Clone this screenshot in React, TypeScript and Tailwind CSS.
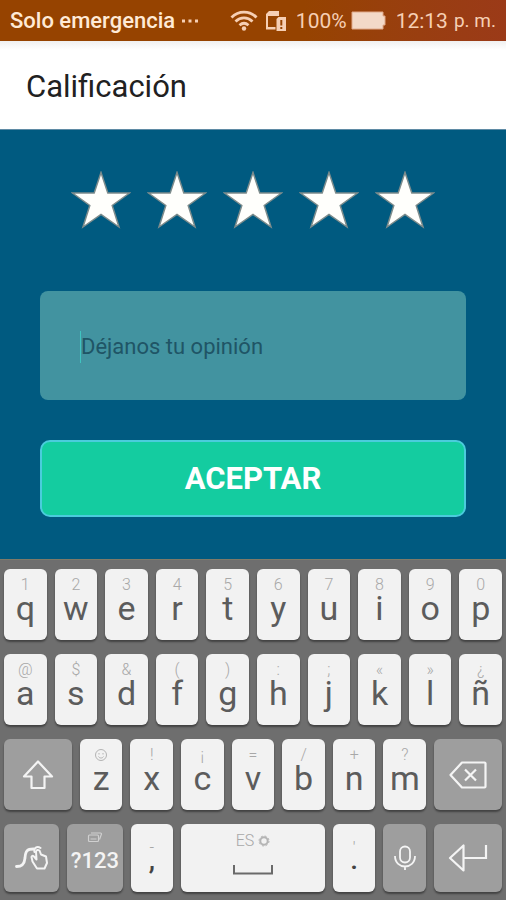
import React, { useState } from "react";
import clsx from "clsx";

interface KeyInterface {
  label: string;
  hint?: React.ReactNode;
}

const firstRow: KeyInterface[] = [
  { label: "q", hint: "1" },
  { label: "w", hint: "2" },
  { label: "e", hint: "3" },
  { label: "r", hint: "4" },
  { label: "t", hint: "5" },
  { label: "y", hint: "6" },
  { label: "u", hint: "7" },
  { label: "i", hint: "8" },
  { label: "o", hint: "9" },
  { label: "p", hint: "0" },
];

const secondRow: KeyInterface[] = [
  { label: "a", hint: "@" },
  { label: "s", hint: "$" },
  { label: "d", hint: "&" },
  { label: "f", hint: "(" },
  { label: "g", hint: ")" },
  { label: "h", hint: ":" },
  { label: "j", hint: ";" },
  { label: "k", hint: "«" },
  { label: "l", hint: "»" },
  { label: "ñ", hint: "¿" },
];

const SmileIcon = () => (
  <svg width="14" height="14" viewBox="0 0 14 14" fill="none" stroke="#b4b4b4">
    <circle cx="7" cy="7" r="5.5" />
    <path d="M5 5v1.5M9 5v1.5M4.5 8.5c1 2 4 2 5 0" />
  </svg>
);

const thirdRow: KeyInterface[] = [
  { label: "z", hint: <SmileIcon /> },
  { label: "x", hint: "!" },
  { label: "c", hint: "¡" },
  { label: "v", hint: "=" },
  { label: "b", hint: "/" },
  { label: "n", hint: "+" },
  { label: "m", hint: "?" },
];

const keyShadow = "rounded-md shadow-[0_2px_2px_rgba(0,0,0,0.4)]";

const LetterKey = ({ label, hint }: KeyInterface) => (
  <button
    type="button"
    className={clsx(
      "col-span-2 flex flex-col items-center bg-[#f2f2f2] pt-2",
      keyShadow
    )}
  >
    <span className="flex h-4 items-center text-base leading-4 font-light text-[#a8a8a8]">
      {hint}
    </span>
    <span className="text-[34px] leading-[30px] text-[#5c5c5c]">{label}</span>
  </button>
);

const SymbolKey = ({ label, hint }: KeyInterface) => (
  <button
    type="button"
    className={clsx(
      "col-span-2 flex flex-col items-center bg-[#f2f2f2] pt-4",
      keyShadow
    )}
  >
    <span className="h-3 text-base leading-4 font-light text-[#a0a0a0]">
      {hint}
    </span>
    <span className="text-[28px] leading-4 font-medium text-[#444444]">
      {label}
    </span>
  </button>
);

interface ActionKeyProps {
  name: string;
  className?: string;
  children: React.ReactNode;
}

const ActionKey = ({ name, className, children }: ActionKeyProps) => (
  <button
    type="button"
    aria-label={name}
    className={clsx(
      "flex items-center justify-center bg-[#9e9e9e] text-[#f4f4f4]",
      keyShadow,
      className
    )}
  >
    {children}
  </button>
);

const StatusBar = () => (
  <div className="flex h-[41px] items-center justify-between bg-linear-to-r from-[#964300] from-60% to-[#9b3a18] px-[10px] text-[21px] leading-7 text-[#f6cfb4]">
    <div className="flex items-center gap-[6px]">
      <span className="text-[22px] font-medium text-[#ffead6]">
        Solo emergencia
      </span>
      <svg width="18" height="4" viewBox="0 0 18 4" fill="currentColor">
        <path d="M1 .5h3v3H1zM7.500 .5h3v3h-3zM14 .5h3v3h-3z" />
      </svg>
    </div>
    <div className="flex items-center">
      <svg
        width="28"
        height="22"
        viewBox="0 0 28 22"
        fill="none"
        stroke="currentColor"
        strokeWidth="2.800"
      >
        <path d="M1.500 7.500C8.500 .3 19.500 .3 26.500 7.500" />
        <path d="M5.500 11.500c5-4.800 12-4.800 17 0" />
        <path d="M9.500 15.300c2.800-2.500 6.200-2.500 9 0" />
        <circle cx="14" cy="18.500" r="2.200" fill="currentColor" stroke="none" />
      </svg>
      <svg
        className="ml-[7px]"
        width="22"
        height="22"
        viewBox="0 0 22 22"
        fill="currentColor"
      >
        <path d="M4 1H14V6H3V17H10.500V19.500H1V4z" />
        <path
          fillRule="evenodd"
          d="M13.500 7H21V21H11.500V9zM15.300 10v5.500h2V10zm0 7v2h2v-2z"
        />
      </svg>
      <span className="ml-[9px]">100%</span>
      <svg className="ml-1" width="36" height="20" viewBox="0 0 36 20">
        <path d="M1 1h31v4h2v9h-2v4H1z" fill="#f3d9c8" stroke="#e0a98a" />
      </svg>
      <span className="ml-[9px]">12:13</span>
      <span className="ml-[6px] text-[19px]">p. m.</span>
    </div>
  </div>
);

const stars = [1, 2, 3, 4, 5];

const Rating = () => {
  const [rating, setRating] = useState(5);
  return (
    <div className="flex justify-center gap-4">
      {stars.map((star) => (
        <button
          key={star}
          type="button"
          aria-label={`${star} estrellas`}
          onClick={() => setRating(star)}
        >
          <svg width="60" height="58" viewBox="0 0 60 58">
            <path
              d="M30 1.500 36.800 22H58.500L41.200 34.500 48 56 30 43.500 12 56 18.800 34.500 1.500 22H23.200z"
              fill={star <= rating ? "#fffffc" : "none"}
              stroke="#7d8c8c"
              strokeWidth="1.500"
            />
          </svg>
        </button>
      ))}
    </div>
  );
};

const Keyboard = () => (
  <div className="flex flex-col gap-[14px] border-t border-[#7f7a68] bg-[#6e6e6e] px-1 pt-[9px] pb-2">
    <div className="grid h-[71px] grid-cols-20 gap-2">
      {firstRow.map((key) => (
        <LetterKey key={key.label} {...key} />
      ))}
    </div>
    <div className="grid h-[71px] grid-cols-20 gap-2">
      {secondRow.map((key) => (
        <LetterKey key={key.label} {...key} />
      ))}
    </div>
    <div className="grid h-[71px] grid-cols-20 gap-2">
      <ActionKey name="Mayúsculas" className="col-span-3">
        <svg
          width="32"
          height="30"
          viewBox="0 0 32 30"
          fill="none"
          stroke="currentColor"
          strokeWidth="2.200"
          strokeLinejoin="round"
        >
          <path d="M16 1.500 30 16.500H22.500V28H9.500V16.500H2z" />
        </svg>
      </ActionKey>
      {thirdRow.map((key) => (
        <LetterKey key={key.label} {...key} />
      ))}
      <ActionKey name="Borrar" className="col-span-3">
        <svg
          width="38"
          height="28"
          viewBox="0 0 38 28"
          fill="none"
          stroke="currentColor"
          strokeWidth="2.200"
          strokeLinejoin="round"
        >
          <path d="M13 1.500H35.500Q36.500 1.500 36.500 2.500V25.500Q36.500 26.500 35.500 26.500H13L1.500 14z" />
          <path d="m16 8.500 11 11M27 8.500l-11 11" />
        </svg>
      </ActionKey>
    </div>
    <div className="grid h-[68px] grid-cols-20 gap-2">
      <div className="col-span-5 grid grid-cols-2 gap-2">
        <ActionKey name="Escritura por deslizamiento">
          <svg
            width="34"
            height="26"
            viewBox="0 0 34 26"
            fill="none"
            stroke="currentColor"
            strokeWidth="2"
            strokeLinecap="round"
            strokeLinejoin="round"
          >
            <path
              d="M1.500 21.500C8 21.500 9.500 18 10 13 10.500 6 12 4 18.500 4"
              strokeWidth="2.800"
            />
            <path d="M22 23.500 17.500 16.500 16.500 12Q17 10 19 11.500L21.500 14.500 21 6.500Q22 4 24.500 5.500L26 9.500 31 11.500 32 18 29.500 23.500z" />
            <path d="M19.500 7C18.500 3 22 .5 25.500 3" />
          </svg>
        </ActionKey>
        <button
          type="button"
          className={clsx(
            "flex flex-col items-center bg-[#9e9e9e] pt-[7px] text-[#f4f4f4]",
            keyShadow
          )}
        >
          <svg
            width="16"
            height="12"
            viewBox="0 0 16 12"
            fill="none"
            stroke="#d0d0d0"
            strokeWidth="1.200"
          >
            <rect x="1.500" y="4" width="10" height="6.500" rx="1" />
            <path d="M4 2h9.500Q14.500 2 14.500 3L12.500 8.500M3.500 8h6" />
          </svg>
          <span className="mt-1 text-[22px] leading-7 font-medium">?123</span>
        </button>
      </div>
      <SymbolKey label="," hint="-" />
      <button
        type="button"
        aria-label="Espacio"
        className={clsx(
          "col-span-6 flex flex-col items-center bg-[#f2f2f2] pt-[9px]",
          keyShadow
        )}
      >
        <span className="flex items-center gap-1 text-base leading-4 font-light text-[#a8a8a8]">
          ES
          <svg
            width="12"
            height="12"
            viewBox="0 0 12 12"
            fill="none"
            stroke="#b4b4b4"
          >
            <circle cx="6" cy="6" r="5" strokeDasharray="2 1.927" />
            <circle cx="6" cy="6" r="3.700" strokeWidth="2" />
          </svg>
        </span>
        <svg
          className="mt-4"
          width="40"
          height="10"
          viewBox="0 0 40 10"
          fill="none"
          stroke="#6a6a6a"
          strokeWidth="2"
        >
          <path d="M1 0v8.500h38V0" />
        </svg>
      </button>
      <SymbolKey label="." hint="'" />
      <ActionKey name="Voz" className="col-span-2">
        <svg
          width="24"
          height="26"
          viewBox="0 0 24 26"
          fill="none"
          stroke="currentColor"
          strokeWidth="1.800"
        >
          <rect x="7" y="1.500" width="10" height="16" rx="5" />
          <path d="M2 11c0 14 20 14 20 0M12 21.500V25" />
        </svg>
      </ActionKey>
      <ActionKey name="Intro" className="col-span-3">
        <svg
          width="40"
          height="28"
          viewBox="0 0 40 28"
          fill="none"
          stroke="currentColor"
          strokeWidth="2.200"
          strokeLinejoin="round"
        >
          <path d="M15.500 1.500V26.500L2 14z" />
          <path d="M15.500 14H38V1" strokeLinejoin="miter" />
        </svg>
      </ActionKey>
    </div>
  </div>
);

export default function App() {
  const [opinion, setOpinion] = useState("");
  return (
    <div className="flex min-h-screen flex-col bg-[#005a80] font-[Roboto,sans-serif]">
      <StatusBar />
      <header className="border-b border-[#5f8ba5] bg-white bg-linear-to-b from-[#f0f0f0] to-white to-10% px-[26px] pt-[26px] pb-[22px]">
        <h1 className="text-[31px] leading-10 text-[#212121]">Calificación</h1>
      </header>
      <main className="flex flex-1 flex-col px-10 pt-[41px] pb-[41px]">
        <Rating />
        <div className="mt-[62px] flex h-[109px] items-center rounded-lg bg-[#4293a0] px-10 pt-[2px]">
          <span className="h-8 w-px bg-[#3fc4c0]" />
          <input
            type="text"
            aria-label="Déjanos tu opinión"
            placeholder="Déjanos tu opinión"
            value={opinion}
            onChange={(e) => setOpinion(e.target.value)}
            className="w-full min-w-0 text-[22px] leading-8 text-[#1f5566] outline-none placeholder:text-[#1f5566]"
          />
        </div>
        <button
          type="button"
          className="mt-10 h-[77px] rounded-[10px] border-2 border-[#4accdc] bg-[#14cca0] pt-[2px] text-[31px] font-bold text-white"
        >
          ACEPTAR
        </button>
      </main>
      <Keyboard />
    </div>
  );
}
